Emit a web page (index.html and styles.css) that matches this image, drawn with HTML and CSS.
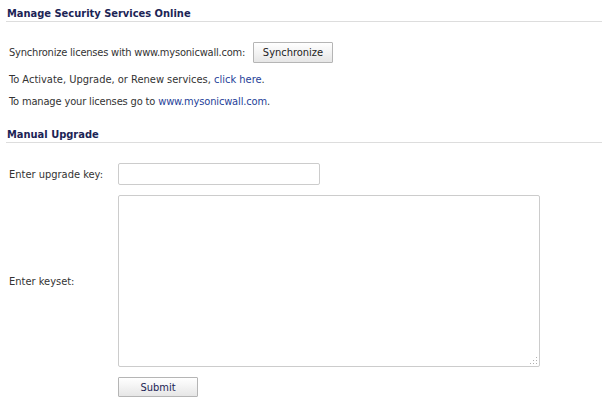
FILE: index.html
```html
<!DOCTYPE html>
<html>
<head>
<meta charset="utf-8">
<link rel="stylesheet" href="styles.css">
</head>
<body>
<div class="page">
  <h2 class="sec-head">Manage Security Services Online</h2>
  <div class="sync-row">
    <span class="sync-label">Synchronize licenses with www.mysonicwall.com:</span>
    <button class="btn btn-sync">Synchronize</button>
  </div>
  <p class="line">To Activate, Upgrade, or Renew services, <a href="#">click here</a>.</p>
  <p class="line line-tight">To manage your licenses go to <a href="#">www.mysonicwall.com</a>.</p>

  <h2 class="sec-head sec-head-2">Manual Upgrade</h2>
  <div class="form-row key-row">
    <label class="lbl">Enter upgrade key:</label>
    <input class="txt" type="text">
  </div>
  <div class="form-row keyset-row">
    <label class="lbl">Enter keyset:</label>
    <div class="area-wrap">
      <textarea class="area"></textarea>
      <svg class="grip" width="8" height="7" viewBox="0 0 8 7">
        <rect x="7" y="0" width="1" height="1" fill="#b0b0b0"/>
        <rect x="4" y="3" width="1" height="1" fill="#b0b0b0"/>
        <rect x="7" y="3" width="1" height="1" fill="#b0b0b0"/>
        <rect x="1" y="6" width="1" height="1" fill="#b0b0b0"/>
        <rect x="4" y="6" width="1" height="1" fill="#b0b0b0"/>
        <rect x="7" y="6" width="1" height="1" fill="#b0b0b0"/>
      </svg>
    </div>
  </div>
  <div class="form-row submit-row">
    <span class="lbl"></span>
    <button class="btn btn-submit">Submit</button>
  </div>
</div>
</body>
</html>
```
FILE: styles.css
```css
html, body {
  margin: 0;
  padding: 0;
  background: #ffffff;
}
body {
  font-family: "DejaVu Sans Condensed", "DejaVu Sans", sans-serif;
  font-stretch: condensed;
  font-size: 11px;
  color: #333333;
}
.page {
  padding-left: 6px;
}
.sec-head {
  margin: 0;
  padding: 7px 0 0 1px;
  line-height: 14px;
  font-size: 11px;
  font-weight: bold;
  color: #1c2455;
  border-bottom: 1px solid #dddddd;
}
.sec-head-2 {
  margin-top: 12px;
}
.sync-row {
  display: flex;
  align-items: center;
  height: 21px;
  margin-top: 20px;
  padding-left: 3px;
}
.sync-label {
  flex: none;
  width: 244px;
  white-space: nowrap;
  letter-spacing: -0.2px;
}
.line {
  margin: 10px 0 0;
  padding-left: 3px;
  line-height: 14px;
  white-space: nowrap;
}
.line + .line {
  margin-top: 8px;
}
.line-tight {
  letter-spacing: -0.15px;
}
a {
  color: #1f3f99;
  text-decoration: none;
}
.btn {
  font-family: inherit;
  font-stretch: condensed;
  font-size: 11px;
  width: 80px;
  padding: 0;
  border: 1px solid #b5b5b5;
  background: linear-gradient(#ffffff, #f3f3f3 50%, #e6e6e6);
  border-radius: 1px;
  flex: none;
}
.btn-sync {
  height: 21px;
  color: #222222;
}
.btn-submit {
  height: 20px;
  color: #1c2455;
}
.form-row {
  display: flex;
  align-items: center;
}
.lbl {
  width: 109px;
  padding-left: 3px;
  flex: none;
}
.key-row {
  margin-top: 20px;
}
.txt {
  box-sizing: border-box;
  width: 202px;
  height: 22px;
  margin: 0;
  border: 1px solid #cccccc;
  border-radius: 2px;
}
.keyset-row {
  margin-top: 10px;
}
.area-wrap {
  position: relative;
  width: 422px;
  height: 172px;
}
.area {
  display: block;
  box-sizing: border-box;
  width: 422px;
  height: 172px;
  margin: 0;
  border: 1px solid #cccccc;
  border-radius: 2px;
  resize: none;
}
.grip {
  position: absolute;
  right: 3px;
  bottom: 3px;
}
.submit-row {
  margin-top: 10px;
}
```
